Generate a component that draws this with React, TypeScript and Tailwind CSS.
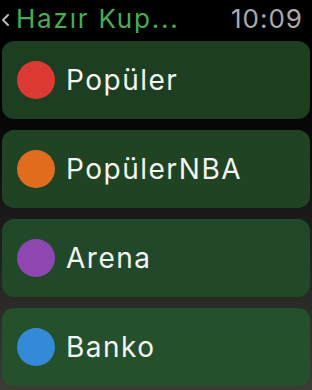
const items = [
  { name: 'Popüler', dot: 'bg-[#dd3a33]', card: 'bg-[#1d3e20]' },
  { name: 'PopülerNBA', dot: 'bg-[#e06d1e]', card: 'bg-[#1f4323]' },
  { name: 'Arena', dot: 'bg-[#8e46b0]', card: 'bg-[#22482a]' },
  { name: 'Banko', dot: 'bg-[#358ad8]', card: 'bg-[#25502c]' },
]

export default function App() {
  return (
    <div
      className="w-[312px] h-[390px] overflow-hidden bg-gradient-to-b from-[#000000] via-[#161616] to-[#3b3c36] font-['Inter','Roboto',sans-serif]"
    >
      {/* Header */}
      <div className="flex items-center justify-between h-[38px] pl-[1px] pr-[9px]">
        <div className="flex items-center">
          <svg width="10" height="14" viewBox="0 0 10 14" className="mr-[5px] mt-[1px]">
            <path d="M7 2 L2 7 L7 12" stroke="#b8b8bd" strokeWidth="2" fill="none" strokeLinecap="round" strokeLinejoin="round" />
          </svg>
          <span className="text-[26px] leading-none text-[#47ad4d] tracking-[1.8px]">Hazır Kup...</span>
        </div>
        <span className="text-[26px] leading-none text-[#a9a9ae] tracking-[1px]">10:09</span>
      </div>

      {/* List */}
      <div className="flex flex-col gap-[11px] px-[2px] pt-[3px]">
        {items.map((it) => (
          <div
            key={it.name}
            className={`flex items-center h-[78px] rounded-[12px] pl-[15px] ${it.card}`}
          >
            <div className={`w-[38px] h-[38px] rounded-full ${it.dot}`} />
            <span className="ml-[11px] text-[28px] text-[#f4f4f4] leading-none tracking-[1.5px]">{it.name}</span>
          </div>
        ))}
      </div>
    </div>
  )
}
